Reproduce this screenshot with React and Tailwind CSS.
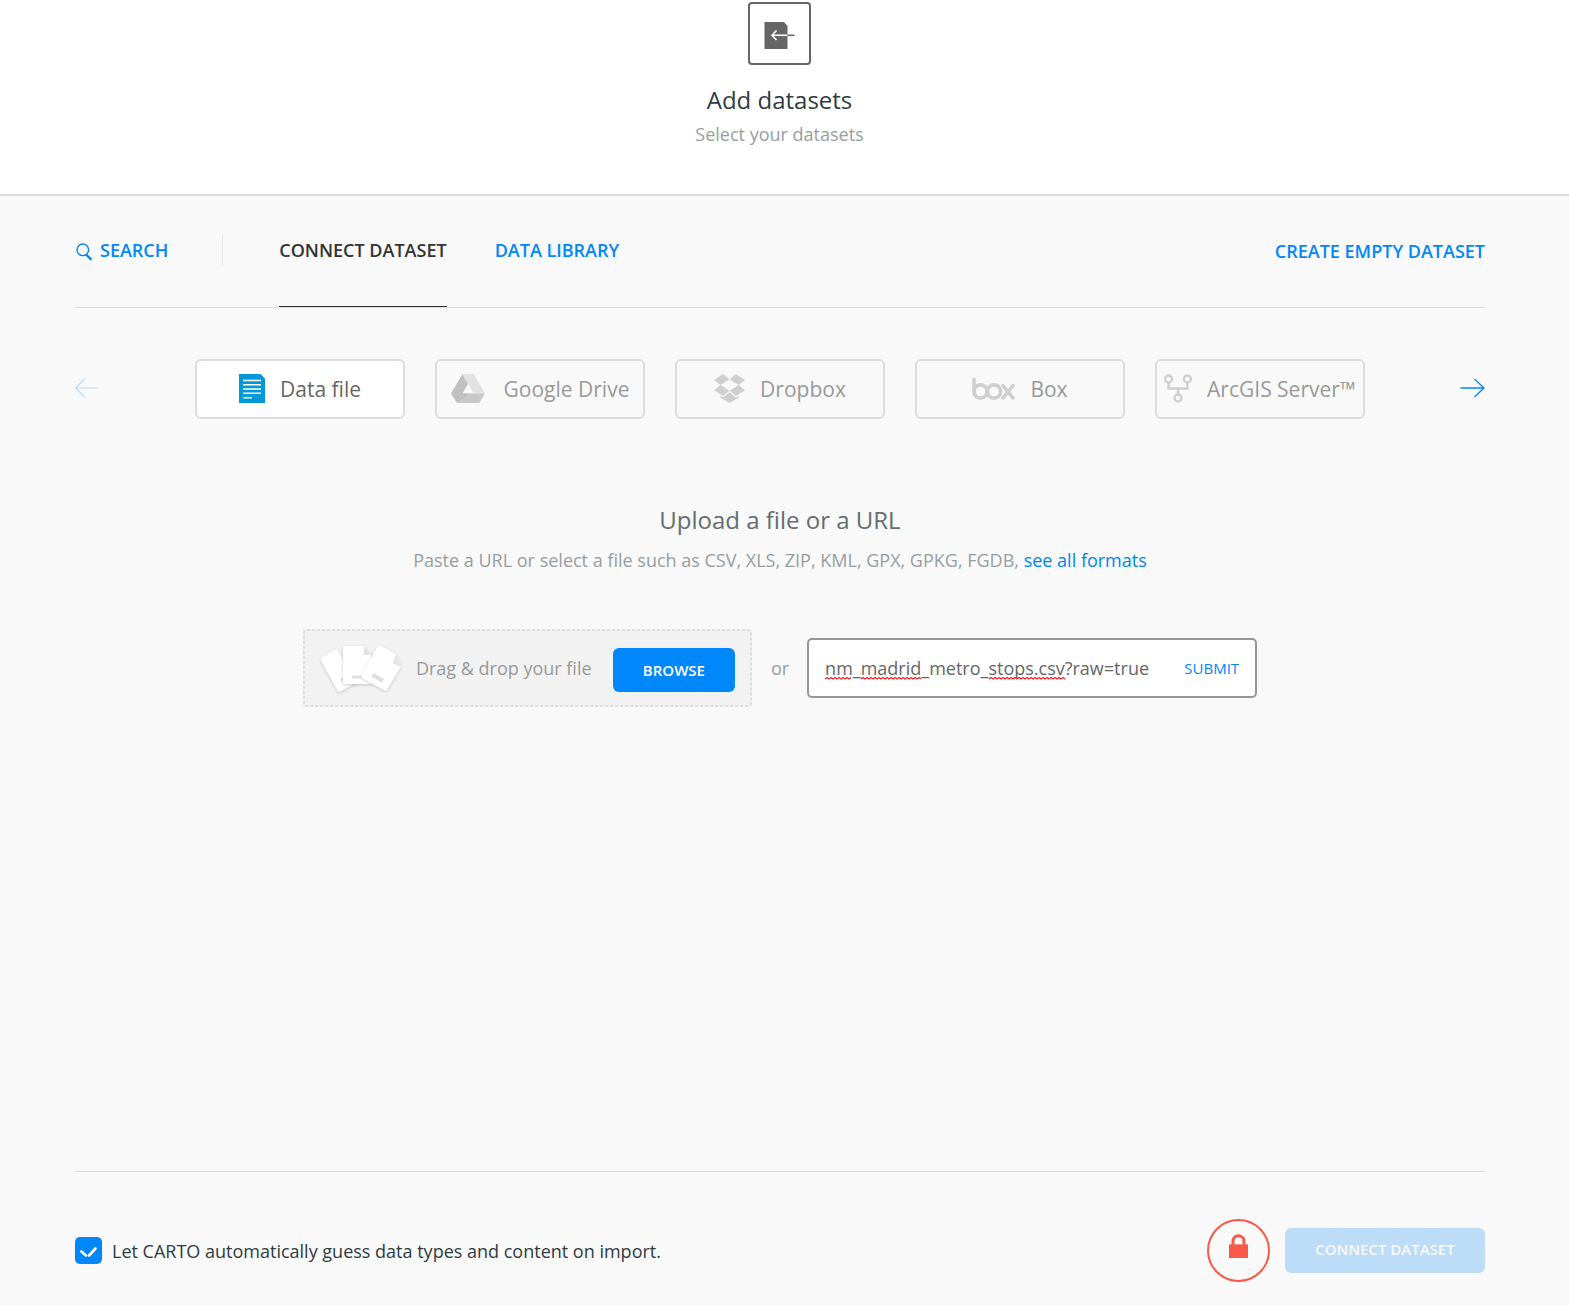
import React from 'react';

const DataFileIcon = () => (
  <svg className="mb-0.5" width="26" height="29" viewBox="0 0 26 29" aria-hidden="true">
    <path d="M0 0h21.500L26 4.500V29H0z" fill="#0299d8" />
    <path d="M4 6.500h18M4 10.700h18M4 15h18M4 19.300h18M4 23.700h9" stroke="#fff" strokeWidth="1.400" fill="none" />
  </svg>
);

const DriveIcon = () => (
  <svg className="mr-1 mb-0.5" width="34" height="29" viewBox="0 0 34 29" aria-hidden="true">
    <path d="M11.400 0 17 10 6 29 0 19.400z" fill="#c0c0c0" />
    <path d="M11.400 0H22.600L34 19.400H22.600z" fill="#e2e2e2" />
    <path d="M11.500 19.400H34L28.300 29H5.700z" fill="#c8c8c8" />
    <path d="M5.700 29 11.500 19.400H18z" fill="#bdbdbd" />
  </svg>
);

const DropboxIcon = () => (
  <svg className="mb-0.5" width="31" height="29" viewBox="0 0 31 29" fill="#cfcfcf" aria-hidden="true">
    <path d="M9 0 15.500 5.500 6.400 11 0 6z" />
    <path d="M22 0 31 6 24.600 11 15.500 5.500z" />
    <path d="M0 16.200 6.400 11 15.500 16.800 9 22z" />
    <path d="M24.600 11 31 16.200 22 22 15.500 16.800z" />
    <path d="M15.500 18.200 22.100 23.500 25 21.700V23.500L15.500 29 6.200 23.500V21.700L9 23.500z" />
  </svg>
);

const BoxIcon = () => (
  <svg className="mb-0.5" width="43" height="23" viewBox="0 0 43 23" fill="none" stroke="#cfcfcf" strokeWidth="3.600" strokeLinecap="round" aria-hidden="true">
    <path d="M2 2.200V14.500" />
    <circle cx="8.600" cy="14.500" r="6.600" />
    <circle cx="22" cy="14.500" r="6.600" />
    <path d="M31 8.600 41 20.800M41 8.600 31 20.800" />
  </svg>
);

const ArcGisIcon = () => (
  <svg className="mb-0.5" width="28" height="29" viewBox="0 0 28 29" fill="none" stroke="#cfcfcf" strokeWidth="2.400" aria-hidden="true">
    <circle cx="4.600" cy="5" r="3.500" />
    <circle cx="23.400" cy="5" r="3.500" />
    <circle cx="14" cy="24" r="3.500" />
    <path d="M4.600 8.500V14.500H23.400V8.500M14 14.500V20.500" />
  </svg>
);

const sources = [
  { name: 'Data file', Icon: DataFileIcon, active: true },
  { name: 'Google Drive', Icon: DriveIcon },
  { name: 'Dropbox', Icon: DropboxIcon },
  { name: 'Box', Icon: BoxIcon },
  { name: 'ArcGIS Server™', Icon: ArcGisIcon },
];

const ArrowLeft = () => (
  <svg width="25" height="20" viewBox="0 0 25 20" fill="none" stroke="currentColor" strokeWidth="1.200" aria-hidden="true">
    <path d="M23.500 10H.5M9.500 1 .5 10 9.500 19" />
  </svg>
);

const ArrowRight = () => (
  <svg width="25" height="20" viewBox="0 0 25 20" fill="none" stroke="currentColor" strokeWidth="1.300" aria-hidden="true">
    <path d="M.5 10H24M14.500 1 24 10 14.500 19" />
  </svg>
);

const FilesIcon = () => (
  <svg className="mt-1" width="84" height="52" viewBox="0 0 84 52" overflow="visible" aria-hidden="true">
    <defs>
      <filter id="soft" x="-20%" y="-20%" width="140%" height="150%">
        <feDropShadow dx="0" dy="1" stdDeviation="1.600" floodColor="#000" floodOpacity="0.2" />
      </filter>
    </defs>
    <g filter="url(#soft)">
      <path d="M2.800 13.500 16 5.800Q18 4.700 19.200 6.700L37 39 21 47.500Q19.500 48.300 18.500 46.500L2 16.500Q1 14.600 2.800 13.500z" fill="#fff" />
      <path d="M21 35.500 26 33v6z" fill="#e0e0e0" />
    </g>
    <g filter="url(#soft)">
      <path d="M26 2H45L52 11V40H26Q24 40 24 38V4Q24 2 26 2z" fill="#fff" />
      <path d="M45 2V11H52z" fill="#e4e4e4" />
      <path d="M33 31.500H44V34.500H33z" fill="#e0e0e0" />
    </g>
    <g filter="url(#soft)">
      <path d="M61 1.600 77 10.500 81.500 23 68 45.500Q67 47.200 65.300 46.300L43.600 34Q41.800 33 42.800 31.200L58.500 2.800Q59.500 .8 61 1.600z" fill="#fff" />
      <path d="M77 10.500 73.500 19 81.500 23z" fill="#e4e4e4" />
      <path d="M54.500 29 65 35 63 38.800 52.500 32.800z" fill="#e0e0e0" />
    </g>
  </svg>
);

const squiggle = (from, to) => {
  let d = `M${from} 3`;
  for (let x = from, up = true; x < to; x += 2, up = !up) d += ` L${x + 2} ${up ? 1.5 : 3}`;
  return d;
};

export default function App() {
  return (
    <div className="flex min-h-screen flex-col bg-[#f9f9f9] font-['Open_Sans',sans-serif] text-lg text-[#2e3c43]">
      <header className="flex flex-col items-center border-b-2 border-[#ddd] bg-white pt-0.5 pr-2.5 pb-[45px]">
        <div className="flex size-[63px] items-center justify-center rounded-[4px] border-2 border-[#666]">
          <svg className="mt-1" width="31" height="27" viewBox="0 0 31 27" fill="none" aria-hidden="true">
            <path d="M.5 0H20L23.500 4V27H.5z" fill="#666" />
            <path d="M8 13.300H23.500M12.500 8.500 8 13.300 12.500 18" stroke="#fff" strokeWidth="1.600" />
            <path d="M23.500 13.300H30.500" stroke="#666" strokeWidth="1.600" />
          </svg>
        </div>
        <h1 className="mt-[17px] text-2xl leading-9">Add datasets</h1>
        <p className="mt-px leading-[30px] text-[#979ea1]">Select your datasets</p>
      </header>

      <main className="flex flex-1 flex-col pr-[84px] pl-[75px]">
        <nav className="flex h-28 items-stretch border-b border-[#ddd] font-semibold">
          <a href="#search" className="flex items-center gap-[7px] pb-1 pl-px text-[#0087f9]">
            <svg width="17" height="18" viewBox="0 0 17 18" fill="none" stroke="currentColor" className="mt-1" aria-hidden="true">
              <circle cx="6.800" cy="6.800" r="5.800" strokeWidth="1.400" />
              <path d="M10 11.500 15.500 16.800" strokeWidth="2.400" />
            </svg>
            SEARCH
          </a>
          <span className="mb-1 ml-[54px] h-[30px] w-px self-center bg-[#e8e8e8]" />
          <a href="#connect" className="ml-14 flex items-center border-b border-[#333] pb-[3px] text-[#333]">CONNECT DATASET</a>
          <a href="#library" className="ml-12 flex items-center pb-1 text-[#0087f9]">DATA LIBRARY</a>
          <button className="ml-auto pb-0.5 text-[#0087f9]">CREATE EMPTY DATASET</button>
        </nav>

        <div className="mt-[51px] flex items-center justify-between">
          <button aria-label="Previous" className="pb-0.5 text-[#b5dcfb]"><ArrowLeft /></button>
          <div className="flex gap-[30px]">
            {sources.map(({ name, Icon, active }) => (
              <button
                key={name}
                className={
                  active
                    ? 'flex h-[60px] w-[210px] items-center justify-center gap-[15px] rounded-md border-2 border-[#ddd] bg-white text-[21px] text-[#666]'
                    : 'flex h-[60px] w-[210px] items-center justify-center gap-[15px] rounded-md border-2 border-[#ddd] text-[21px] whitespace-nowrap text-[#999]'
                }
              >
                <Icon />
                {name}
              </button>
            ))}
          </div>
          <button aria-label="Next" className="pb-0.5 text-[#0087f9]"><ArrowRight /></button>
        </div>

        <section className="mt-[83px] flex flex-col items-center">
          <h2 className="text-2xl leading-9 text-[#636d72]">Upload a file or a URL</h2>
          <p className="mt-[7px] leading-[30px] text-[#979ea1]">
            Paste a URL or select a file such as CSV, XLS, ZIP, KML, GPX, GPKG, FGDB,{' '}
            <a href="#formats" className="text-[#0087e8]">see all formats</a>
          </p>
          <div className="mt-[54px] flex items-center">
            <div className="relative flex h-[78px] w-[449px] items-center bg-[#f2f2f2] pr-[17px] pl-4">
              <svg className="absolute inset-0 size-full overflow-visible p-px" aria-hidden="true">
                <rect width="100%" height="100%" rx="3" fill="none" stroke="#ddd" strokeWidth="2" strokeDasharray="3 2" />
              </svg>
              <FilesIcon />
              <span className="ml-[13px] text-[#999]">Drag &amp; drop your file</span>
              <button className="relative mt-1 ml-auto h-11 w-[122px] rounded-md bg-[#0087f9] pt-px text-[15px] font-semibold text-white">BROWSE</button>
            </div>
            <span className="mr-[18px] ml-[19px] text-[#979ea1]">or</span>
            <form className="flex h-[60px] w-[450px] items-center rounded-[5px] border-2 border-[#979797] bg-white px-4" onSubmit={(e) => e.preventDefault()}>
              <div className="relative flex-1">
                <input
                  aria-label="Dataset URL"
                  className="w-full text-[#666] outline-none"
                  spellCheck={false}
                  defaultValue="nm_madrid_metro_stops.csv?raw=true"
                />
                <svg className="pointer-events-none absolute bottom-0.5 left-0" width="250" height="4" fill="none" stroke="#f5222d" strokeWidth="1.300" aria-hidden="true">
                  <path d={squiggle(0, 26)} />
                  <path d={squiggle(36, 96)} />
                  <path d={squiggle(164, 240)} />
                </svg>
              </div>
              <button className="pt-px text-[15px] text-[#0087f9]">SUBMIT</button>
            </form>
          </div>
        </section>

        <footer className="mt-auto flex h-[134px] items-center border-t border-[#ddd] pt-[23px]">
          <label className="flex items-center gap-2.5">
            <span className="grid size-[27px]">
              <input type="checkbox" defaultChecked className="col-start-1 row-start-1 size-[27px] appearance-none rounded-[5px] bg-[#0087f9]" />
              <svg className="pointer-events-none col-start-1 row-start-1" viewBox="0 0 27 27" fill="none" stroke="#fff" strokeWidth="2.600" strokeLinecap="round" aria-hidden="true">
                <path d="M6.300 14.500 11 18.500M14 18.500 20.500 11.500" />
              </svg>
            </span>
            <span className="pt-0.5">Let CARTO automatically guess data types and content on import.</span>
          </label>
          <button aria-label="Privacy" className="ml-auto flex size-[63px] items-center justify-center rounded-full border-2 border-[#f95949]">
            <svg className="mb-2" width="19" height="24" viewBox="0 0 19 24" aria-hidden="true">
              <path d="M4 11V7.200a5.500 5.500 0 0 1 11 0V11" fill="none" stroke="#f95949" strokeWidth="3" />
              <path d="M0 10.300H19V24H0z" fill="#f95949" />
            </svg>
          </button>
          <button className="ml-[15px] h-[45px] w-[200px] rounded-md bg-[#bddcf8] text-[15px] font-semibold text-[#f9f9f9]">CONNECT DATASET</button>
        </footer>
      </main>
    </div>
  );
}
